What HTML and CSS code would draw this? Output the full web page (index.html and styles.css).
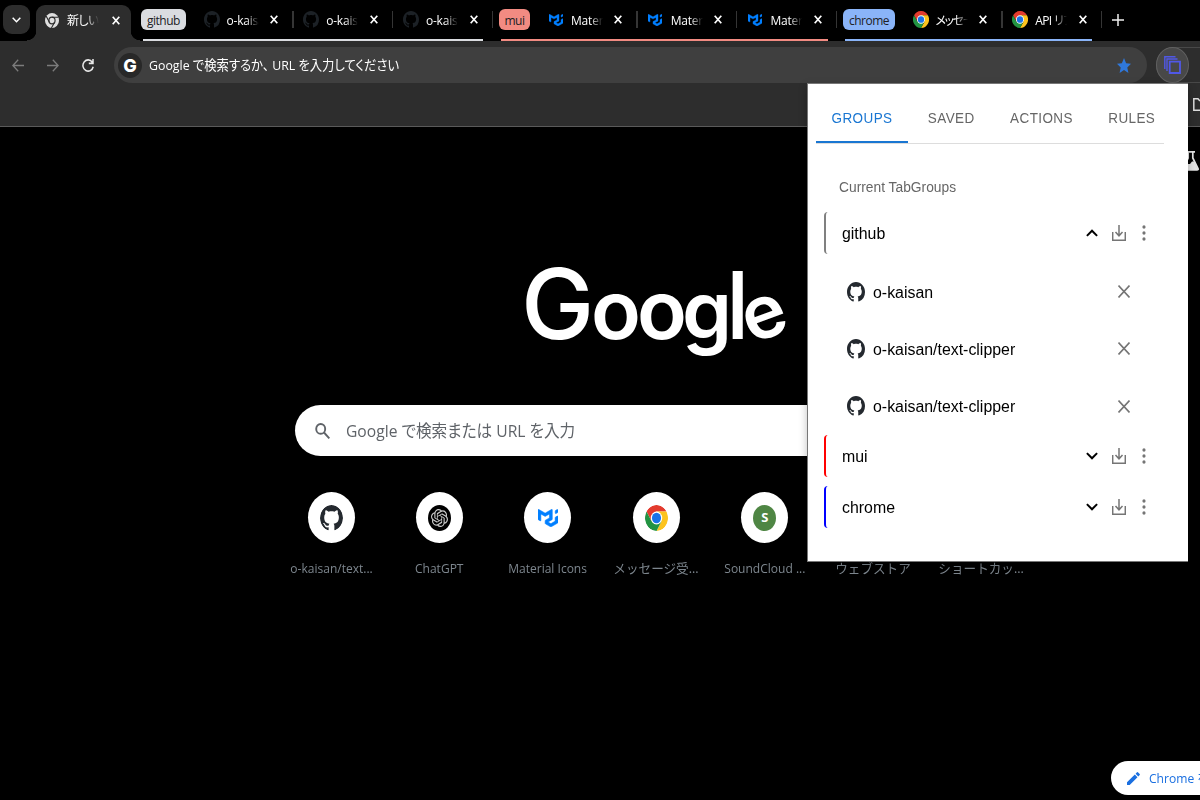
FILE: index.html
```html
<!DOCTYPE html>
<html lang="ja">
<head>
<meta charset="utf-8">
<title>新しいタブ</title>
<link rel="stylesheet" href="styles.css">
</head>
<body>
<svg class="defs" aria-hidden="true">
  <symbol id="github" viewBox="0 0 16 16" preserveAspectRatio="none"><path fill="currentColor" d="M8 0C3.58 0 0 3.58 0 8c0 3.54 2.29 6.53 5.47 7.59.4.07.55-.17.55-.38 0-.19-.01-.82-.01-1.49-2.01.37-2.53-.49-2.69-.94-.09-.23-.48-.94-.82-1.13-.28-.15-.68-.52-.01-.53.63-.01 1.08.58 1.23.82.72 1.21 1.87.87 2.33.66.07-.52.28-.87.51-1.07-1.78-.2-3.64-.89-3.64-3.95 0-.87.31-1.59.82-2.15-.08-.2-.36-1.02.08-2.12 0 0 .67-.21 2.2.82.64-.18 1.32-.27 2-.27.68 0 1.36.09 2 .27 1.53-1.04 2.2-.82 2.2-.82.44 1.1.16 1.92.08 2.12.51.56.82 1.27.82 2.15 0 3.07-1.87 3.75-3.65 3.95.29.25.54.73.54 1.48 0 1.07-.01 1.93-.01 2.2 0 .21.15.46.55.38A8.013 8.013 0 0016 8c0-4.42-3.58-8-8-8z"/></symbol>
  <symbol id="mui" viewBox="0 0 36 32" preserveAspectRatio="none"><path fill="#007fff" stroke="#007fff" stroke-width="1" d="M30.343 21.976a1 1 0 00.502-.864l.018-5.787a1 1 0 01.502-.864l3.137-1.802a1 1 0 011.498.867v10.521a1 1 0 01-.502.867l-11.839 6.8a1 1 0 01-.994.001l-9.291-5.314a1 1 0 01-.504-.868v-5.305l7.683-4.436.003-5.224a1 1 0 00-1.5-.87l-5.687 3.277a1 1 0 01-.998 0L6.666 9.7a1 1 0 00-1.499.866v9.4a1 1 0 01-1.496.869l-3.166-1.81a1 1 0 01-.504-.87l.028-16.43A1 1 0 011.527.86l10.845 6.229a1 1 0 00.996 0L24.21.86a1 1 0 011.498.868v16.434a1 1 0 01-.501.867l-5.678 3.27a1 1 0 00.004 1.735l3.132 1.783a1 1 0 00.993-.002l6.685-3.839zM31 7.234a1 1 0 001.514.857l3-1.8A1 1 0 0036 5.434V1.766A1 1 0 0034.486.91l-3 1.8a1 1 0 00-.486.857v3.668z"/></symbol>
  <symbol id="chrome" viewBox="0 0 48 48" preserveAspectRatio="none">
    <path fill="#e33b2e" d="M3.2 12A24 24 0 0144.800 12L24 12 13.600 30z"/>
    <path fill="#fcc31e" d="M44.800 12A24 24 0 0124 48L34.400 30 24 12z"/>
    <path fill="#229342" d="M24 48A24 24 0 013.200 12L13.600 30 34.400 30z"/>
    <circle cx="24" cy="24" r="12" fill="#fff"/><circle cx="24" cy="24" r="9.500" fill="#1a73e8"/>
  </symbol>
  <symbol id="chrome-mono" viewBox="0 0 48 48" preserveAspectRatio="none">
    <circle cx="24" cy="24" r="24" fill="#dfdfdf"/>
    <circle cx="24" cy="24" r="10.500" fill="none" stroke="#2d2d2d" stroke-width="4"/>
    <path d="M24 13.500H46M14.900 29.200L4 10M33.100 29.200L22 48" stroke="#2d2d2d" stroke-width="3.500"/>
  </symbol>
  <symbol id="openai" viewBox="0 0 24 24" preserveAspectRatio="none"><path fill="currentColor" d="M22.2819 9.8211a5.9847 5.9847 0 0 0-.5157-4.9108 6.0462 6.0462 0 0 0-6.5098-2.9A6.0651 6.0651 0 0 0 4.9807 4.1818a5.9847 5.9847 0 0 0-3.9977 2.9 6.0462 6.0462 0 0 0 .7427 7.0966 5.98 5.98 0 0 0 .511 4.9107 6.051 6.051 0 0 0 6.5146 2.9001A5.9847 5.9847 0 0 0 13.2599 24a6.0557 6.0557 0 0 0 5.7718-4.2058 5.9894 5.9894 0 0 0 3.9977-2.9001 6.0557 6.0557 0 0 0-.7475-7.0729zm-9.022 12.6081a4.4755 4.4755 0 0 1-2.8764-1.0408l.1419-.0804 4.7783-2.7582a.7948.7948 0 0 0 .3927-.6813v-6.7369l2.02 1.1686a.071.071 0 0 1 .038.052v5.5826a4.504 4.504 0 0 1-4.4945 4.4944zm-9.6607-4.1254a4.4708 4.4708 0 0 1-.5346-3.0137l.142.0852 4.783 2.7582a.7712.7712 0 0 0 .7806 0l5.8428-3.3685v2.3324a.0804.0804 0 0 1-.0332.0615L9.74 19.9502a4.4992 4.4992 0 0 1-6.1408-1.6464zM2.3408 7.8956a4.485 4.485 0 0 1 2.3655-1.9728V11.6a.7664.7664 0 0 0 .3879.6765l5.8144 3.3543-2.0201 1.1685a.0757.0757 0 0 1-.071 0l-4.8303-2.7865A4.504 4.504 0 0 1 2.3408 7.872zm16.5963 3.8558L13.1038 8.364 15.1192 7.2a.0757.0757 0 0 1 .071 0l4.8303 2.7913a4.4944 4.4944 0 0 1-.6765 8.1042v-5.6772a.79.79 0 0 0-.407-.667zm2.0107-3.0231l-.142-.0852-4.7735-2.7818a.7759.7759 0 0 0-.7854 0L9.409 9.2297V6.8974a.0662.0662 0 0 1 .0284-.0615l4.8303-2.7866a4.4992 4.4992 0 0 1 6.6802 4.66zM8.3065 12.863l-2.02-1.1638a.0804.0804 0 0 1-.038-.0567V6.0742a4.4992 4.4992 0 0 1 7.3757-3.4537l-.142.0805L8.704 5.459a.7948.7948 0 0 0-.3927.6813zm1.0976-2.3654l2.602-1.4998 2.6069 1.4998v2.9994l-2.5974 1.4997-2.6067-1.4997Z"/></symbol>
  <symbol id="x" viewBox="0 0 8 9" preserveAspectRatio="none"><path d="M.7.800L7.300 8.200M7.300.800L.7 8.200" stroke="currentColor" stroke-width="1.700"/></symbol>
  <symbol id="thin-x" viewBox="0 0 12 13" preserveAspectRatio="none"><path d="M.5.500L11.500 12.500M11.500.500L.5 12.500" stroke="currentColor" stroke-width="1.600"/></symbol>
  <symbol id="chevron" viewBox="0 0 12 8" preserveAspectRatio="none"><path d="M.9 1.100L6 6.300 11.100 1.100" fill="none" stroke="currentColor" stroke-width="2"/></symbol>
  <symbol id="download" viewBox="0 0 14 16" preserveAspectRatio="none"><path d="M.7 7V15.200H13.300V7M7 0V10.500M3.500 7L7 10.800 10.500 7" fill="none" stroke="currentColor" stroke-width="1.500"/></symbol>
  <symbol id="dots" viewBox="0 0 4 16" preserveAspectRatio="none"><g fill="currentColor"><ellipse cx="2" cy="2" rx="1.600" ry="1.800"/><ellipse cx="2" cy="8" rx="1.600" ry="1.800"/><ellipse cx="2" cy="14" rx="1.600" ry="1.800"/></g></symbol>
</svg>

<header class="strip">
  <button class="tab-search"><svg width="9" height="6"><use href="#chevron"/></svg></button>
  <div class="tab active"><svg class="fav mono"><use href="#chrome-mono"/></svg><span class="title jp">新しいタブ</span><svg class="close"><use href="#x"/></svg></div>
  <div class="group grey">
    <span class="chip">github</span>
    <div class="tab"><svg class="fav gh"><use href="#github"/></svg><span class="title">o-kaisan</span><svg class="close"><use href="#x"/></svg></div>
    <div class="tab"><svg class="fav gh"><use href="#github"/></svg><span class="title">o-kaisan</span><svg class="close"><use href="#x"/></svg></div>
    <div class="tab"><svg class="fav gh"><use href="#github"/></svg><span class="title">o-kaisan</span><svg class="close"><use href="#x"/></svg></div>
  </div>
  <div class="group red">
    <span class="chip">mui</span>
    <div class="tab"><svg class="fav mu"><use href="#mui"/></svg><span class="title">Material</span><svg class="close"><use href="#x"/></svg></div>
    <div class="tab"><svg class="fav mu"><use href="#mui"/></svg><span class="title">Material</span><svg class="close"><use href="#x"/></svg></div>
    <div class="tab"><svg class="fav mu"><use href="#mui"/></svg><span class="title">Material</span><svg class="close"><use href="#x"/></svg></div>
  </div>
  <div class="group blue">
    <span class="chip">chrome</span>
    <div class="tab"><svg class="fav ch"><use href="#chrome"/></svg><span class="title jp msg">メッセージ</span><svg class="close"><use href="#x"/></svg></div>
    <div class="tab"><svg class="fav ch"><use href="#chrome"/></svg><span class="title jp">API リファ</span><svg class="close"><use href="#x"/></svg></div>
  </div>
  <svg class="plus" width="12" height="12" viewBox="0 0 12 12"><path d="M6 0V12M0 6H12" stroke="#eee" stroke-width="1.500"/></svg>
</header>

<nav class="toolbar">
  <svg class="nav-ic dim" viewBox="0 0 12 12" preserveAspectRatio="none"><path d="M12 6H1M6.200.700L.9 6l5.300 5.300"/></svg>
  <svg class="nav-ic dim" viewBox="0 0 12 12" preserveAspectRatio="none"><path d="M0 6H11M5.800.700L11.100 6l-5.300 5.300"/></svg>
  <svg class="nav-ic" viewBox="0 0 12 12" preserveAspectRatio="none"><path d="M11.200 7.200A5.200 5.200 0 1110.300 2.900M11 0V4H6.800"/></svg>
  <div class="omnibox">
    <span class="g-badge">G</span>
    <span class="omni-text">Google で検索するか、 URL を入力してください</span>
    <svg class="star" viewBox="0 0 14 14" preserveAspectRatio="none"><path fill="#2f78dc" d="M7 0l2.100 4.800 4.900.5-3.700 3.500 1.100 5.200L7 11.300 2.600 14l1.100-5.200L0 5.300l4.900-.5z"/></svg>
  </div>
  <div class="ext-pill">
    <span class="ext"><svg width="17" height="18" viewBox="0 0 17 18"><g fill="none" stroke="#5058e6" stroke-width="1.400"><path d="M.8 13V.800H11.500M3 15V3H13.500"/><path stroke-width="1.800" d="M5.700 5.700H16V17H5.700z"/></g></svg></span>
  </div>
</nav>
<div class="bookmarks">
  <svg width="14" height="13" viewBox="0 0 14 13"><path d="M.8.800H5L6.500 2.500H13V12.200H.8z" fill="none" stroke="#ddd" stroke-width="1.500"/></svg>
</div>

<main class="ntp">
  <svg class="wordmark" viewBox="0 0 270 110"><text class="wm" y="79"><tspan class="wm-cap" x="-4">G</tspan><tspan x="66">o</tspan><tspan x="112">o</tspan><tspan class="wm-g" x="157">g</tspan><tspan class="wm-l" x="201">l</tspan><tspan class="wm-e" x="226" dy="5" rotate="-20">e</tspan></text></svg>
  <div class="search">
    <svg width="15" height="16" viewBox="0 0 15 16" preserveAspectRatio="none"><g fill="none" stroke="#5f6368" stroke-width="1.900"><ellipse cx="5.700" cy="5.900" rx="4.500" ry="4.900"/><path d="M9 9.500L14.300 15.300"/></g></svg>
    <span class="search-text">Google で検索または URL を入力</span>
  </div>
  <div class="tiles">
    <div class="tile"><span class="disc"><svg class="t-ic gh"><use href="#github"/></svg></span><span class="label">o-kaisan/text...</span></div>
    <div class="tile"><span class="disc"><span class="t-ic gpt"><svg width="17" height="18"><use href="#openai"/></svg></span></span><span class="label">ChatGPT</span></div>
    <div class="tile"><span class="disc"><svg class="t-mui"><use href="#mui"/></svg></span><span class="label">Material Icons</span></div>
    <div class="tile"><span class="disc"><svg class="t-ic"><use href="#chrome"/></svg></span><span class="label wide">メッセージ受...</span></div>
    <div class="tile"><span class="disc"><span class="t-ic letter">S</span></span><span class="label">SoundCloud ...</span></div>
    <div class="tile"><span class="disc"></span><span class="label wide">ウェブストア</span></div>
    <div class="tile"><span class="disc"></span><span class="label wide">ショートカッ...</span></div>
  </div>
  <svg class="flask" viewBox="0 0 17 20" preserveAspectRatio="none"><path d="M4 .900H13M6.200 1V7L1 17.500Q.5 19 2 19H15Q16.500 19 16 17.500L10.800 7V1" fill="none" stroke="#e3e3e3" stroke-width="1.700"/><path d="M3.500 13H8L10 10.500H12.500L16 19H1z" fill="#e3e3e3"/></svg>
  <div class="customize"><svg width="13" height="13" viewBox="0 0 13 13"><path fill="#1a6fe0" d="M0 10.300L7.800 2.500l2.700 2.700L2.700 13H0zM8.600 1.700L10 .300q.4-.4.9 0L12.700 2.100q.4.500 0 .9L11.300 4.400z"/></svg><span>Chrome を</span></div>
</main>

<section class="popup">
  <div class="ptabs"><span class="ptab on"><b>GROUPS</b></span><span class="ptab"><b>SAVED</b></span><span class="ptab"><b>ACTIONS</b></span><span class="ptab"><b>RULES</b></span></div>
  <div class="heading"><span>Current TabGroups</span></div>
  <div class="row grey-bar"><span class="name">github</span><svg class="chev up"><use href="#chevron"/></svg><svg class="dl"><use href="#download"/></svg><svg class="dots"><use href="#dots"/></svg></div>
  <div class="items">
    <div class="item"><svg class="i-gh"><use href="#github"/></svg><span class="name">o-kaisan</span><svg class="i-x"><use href="#thin-x"/></svg></div>
    <div class="item"><svg class="i-gh"><use href="#github"/></svg><span class="name">o-kaisan/text-clipper</span><svg class="i-x"><use href="#thin-x"/></svg></div>
    <div class="item"><svg class="i-gh"><use href="#github"/></svg><span class="name">o-kaisan/text-clipper</span><svg class="i-x"><use href="#thin-x"/></svg></div>
  </div>
  <div class="row red-bar"><span class="name">mui</span><svg class="chev"><use href="#chevron"/></svg><svg class="dl"><use href="#download"/></svg><svg class="dots"><use href="#dots"/></svg></div>
  <div class="row blue-bar"><span class="name">chrome</span><svg class="chev"><use href="#chevron"/></svg><svg class="dl"><use href="#download"/></svg><svg class="dots"><use href="#dots"/></svg></div>
</section>
</body>
</html>
```
FILE: styles.css
```css
* { box-sizing: border-box; }
html { overflow: hidden; }
body { margin: 0; width: 1200px; height: 800px; overflow: hidden; position: relative; background: #000; color: #fff; font-family: "Open Sans", "Noto Sans CJK JP", sans-serif; display: flex; flex-direction: column; }
svg { display: block; flex: none; }
.defs { position: absolute; width: 0; height: 0; }

/* tab strip */
.strip { height: 41px; flex: none; display: flex; align-items: flex-start; background: #000; }
.tab-search { width: 27px; height: 29px; margin: 5px 6px 0 3px; padding: 0; border: 0; border-radius: 9px; background: #2d2d2d; color: #fff; display: flex; align-items: center; justify-content: center; }
.tab { width: 99.700px; height: 41px; padding: 0 15.500px 2px 9.500px; display: flex; align-items: center; position: relative; flex: none; }
.tab::after { content: ""; position: absolute; right: 0; top: 11px; width: 1.500px; height: 17px; background: #353535; }
.tab.active { width: 95px; height: 36px; margin: 5px 10px 0 0; padding: 0 11.500px 6px 9px; background: #2d2d2d; border-radius: 9px 9px 0 0; }
.tab.active::before, .tab.active::after { content: ""; position: absolute; top: auto; bottom: 0; width: 9px; height: 10px; }
.tab.active::before { left: -9px; background: radial-gradient(circle at 0 0, #000 9px, #2d2d2d 9.500px); }
.tab.active::after { right: -9px; background: radial-gradient(circle at 100% 0, #000 9px, #2d2d2d 9.500px); }
.fav.mono { width: 14px; height: 15px; margin-right: 8px; }
.fav.gh { width: 16px; height: 17px; margin-right: 7px; color: #1c2126; }
.fav.mu { width: 14px; height: 12px; margin: 0 8.500px 0 1px; }
.fav.ch { width: 16px; height: 17px; margin-right: 7px; }
.title { width: 32px; height: 20px; line-height: 20px; overflow: hidden; white-space: nowrap; font-size: 12px; letter-spacing: -.2px; position: relative; top: 1px; -webkit-mask-image: linear-gradient(90deg, #000 60%, transparent 100%); mask-image: linear-gradient(90deg, #000 60%, transparent 100%); }
.title.jp { font-feature-settings: "palt"; letter-spacing: -.6px; }
.title.msg { letter-spacing: -1.400px; }
.close { width: 8px; height: 9px; margin-left: auto; color: #fff; }
.group { position: relative; display: flex; height: 41px; }
.group::after { content: ""; position: absolute; left: 2px; right: 10px; bottom: 0; height: 2px; background: var(--c); }
.grey { --c: #dadce0; width: 352px; margin-right: 6px; }
.red { --c: #f28b82; width: 339px; margin-right: 5px; }
.blue { --c: #8ab4f8; width: 259px; margin-right: 10px; }
.chip { height: 21px; margin: 9px 8px 0 0; border-radius: 6px; background: var(--c); color: #202124; font-size: 12px; letter-spacing: -.5px; line-height: 23px; text-align: center; flex: none; }
.grey .chip { width: 45px; }
.red .chip { width: 31px; }
.blue .chip { width: 52px; }
.plus { margin-top: 14px; }

/* toolbar */
.toolbar { height: 42px; flex: none; background: #2d2d2d; padding: 6px 0 0 12px; display: flex; align-items: center; overflow: hidden; }
.nav-ic { width: 12px; height: 13px; margin-right: 23px; fill: none; stroke: #e8e8e8; stroke-width: 1.500; flex: none; }
.nav-ic.dim { stroke: #7c7c7c; stroke-width: 1.300; }
.nav-ic:nth-child(3) { margin-right: 20px; }
.omnibox { width: 1033px; height: 36px; border-radius: 18px; background: #3f3f3f; padding: 0 16px 0 4px; display: flex; align-items: center; flex: none; }
.g-badge { width: 24px; height: 25px; border-radius: 50%; background: #282828; font: 800 18px/25px Inter, sans-serif; text-align: center; }
.omni-text { margin-left: 7px; font-size: 13.500px; line-height: 20px; white-space: nowrap; font-feature-settings: "palt"; transform-origin: 0 50%; transform: scaleX(.914); }
.star { width: 14px; height: 15px; margin-left: auto; }
.ext-pill { width: 44px; height: 36px; margin-left: 9px; border: 1px solid #484848; border-right: 0; border-radius: 18px 0 0 18px; flex: none; display: flex; align-items: center; }
.ext { width: 33px; height: 36px; margin-left: -1px; border: 1px solid #606060; border-radius: 50%; background: #484848; display: flex; align-items: center; justify-content: center; flex: none; }
.bookmarks { height: 44px; flex: none; background: #2d2d2d; border-bottom: 1px solid #5a5a5a; padding: 15px 0 0 1193px; overflow: hidden; }

/* new tab page */
.ntp { flex: 1; display: flex; flex-direction: column; position: relative; overflow: hidden; }
.wordmark { width: 270px; height: 110px; margin: 133px 0 0 525px; flex: none; }
.wm { font-family: Inter, sans-serif; font-weight: 600; font-size: 82px; fill: #fff; }
.wm-cap { font-size: 98px; font-weight: 500; }
.wm-g { font-size: 80px; }
.wm-l { font-size: 93px; font-weight: 500; }
.wm-e { font-size: 74px; }
.search { width: 723px; height: 51px; margin: 35px 0 0 295px; border-radius: 26px; background: #fff; padding: 0 20px; display: flex; align-items: center; flex: none; }
.search-text { margin-left: 16px; font-size: 17px; line-height: 24px; color: #5f6368; white-space: nowrap; font-feature-settings: "palt"; transform-origin: 0 50%; transform: scaleX(.92); }
.tiles { display: grid; grid-template-columns: repeat(7, 108.400px); margin: 36px 0 0 277px; }
.tile { display: flex; flex-direction: column; align-items: center; }
.disc { width: 47px; height: 51px; border-radius: 50%; background: #fff; display: flex; align-items: center; justify-content: center; }
.t-ic { width: 23px; height: 26px; border-radius: 50%; }
.disc .gh { color: #24292f; }
.t-mui { width: 20px; height: 18px; }
.gpt { background: #000; color: #ccc; display: flex; align-items: center; justify-content: center; }
.letter { background: #4f8644; font-size: 13px; font-weight: 700; line-height: 25px; text-align: center; }
.label { margin-top: 15px; font-size: 13px; line-height: 20px; white-space: nowrap; color: #7d868e; transform: scaleX(.925); }
.label.wide { transform: scaleX(.97); }
.flask { position: absolute; left: 1182px; top: 24px; width: 17px; height: 20px; }
.customize { position: absolute; left: 1111px; top: 634px; width: 170px; height: 34px; border-radius: 17px; background: #fff; color: #1a6fe0; display: flex; align-items: center; padding-left: 16px; font-size: 13px; line-height: 20px; white-space: nowrap; }
.customize span { margin: -1px 0 0 9px; transform-origin: 0 50%; transform: scaleX(.93); }

/* extension popup */
.popup { position: absolute; left: 807px; top: 83px; width: 381px; height: 479px; background: #fff; border: 1px solid #777; border-right: 0; box-shadow: 0 3px 8px rgba(0,0,0,.25); color: #000; font-family: "Liberation Sans", Arial, sans-serif; }
.ptabs { width: 348px; height: 60px; margin-left: 8px; border-bottom: 1px solid #ddd; display: flex; }
.ptab { width: 86.500px; height: 59px; display: flex; align-items: center; justify-content: center; flex: none; padding-top: 8px; color: #666; font-size: 13.500px; letter-spacing: .4px; }
.ptab b { font-weight: 400; transform: scaleY(1.150); }
.ptab:nth-child(3) { width: 94px; }
.ptab.on { width: 92px; padding-top: 10px; color: #1976d2; border-bottom: 2px solid #1976d2; }
.heading { margin: 34px 0 14px 31px; font-size: 13.800px; line-height: 20px; color: #666; }
.heading span { display: inline-block; transform: scaleY(1.080); }
.row { width: 324px; height: 42px; margin-left: 16px; border-left: 2.500px solid; border-radius: 4px; display: flex; align-items: center; padding-left: 16px; color: #757575; }
.name { position: relative; top: 1px; color: #000; font-size: 15.900px; line-height: 24px; transform: scaleY(1.070); white-space: nowrap; }
.grey-bar { border-left-color: #808080; }
.red-bar { border-left-color: #f00; margin-bottom: 9px; }
.blue-bar { border-left-color: #00f; }
.chev { width: 12px; height: 8px; margin-left: auto; color: #000; }
.chev.up { transform: scaleY(-1); }
.dl { width: 14px; height: 16px; margin-left: 14px; }
.dots { width: 4px; height: 16px; margin: 0 2px 0 16px; }
.items { padding: 9px 0 0; height: 181px; }
.item { height: 57.300px; margin-left: 39px; width: 283px; display: flex; align-items: center; color: #757575; }
.i-gh { width: 18px; height: 20px; margin-right: 8px; color: #24292f; }
.i-x { width: 12px; height: 13px; margin-left: auto; }
```
